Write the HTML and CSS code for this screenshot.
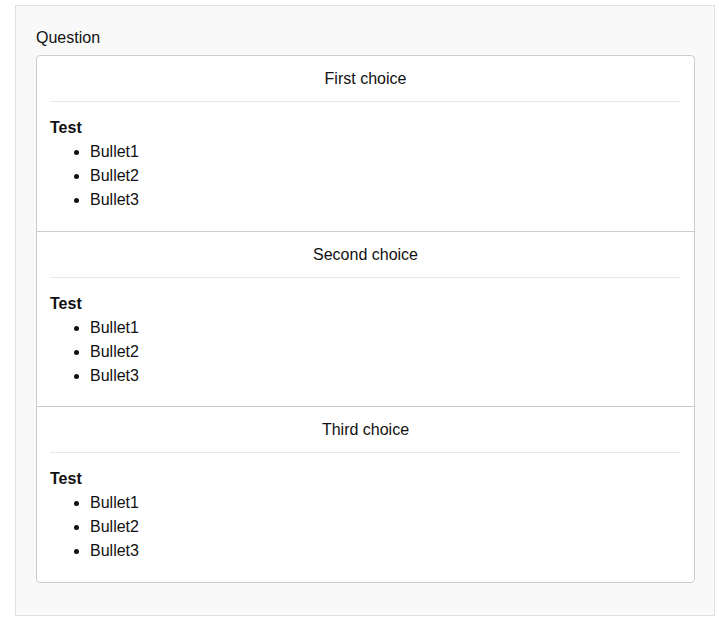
FILE: index.html
```html
<!DOCTYPE html>
<html>
<head>
<meta charset="utf-8">
<link rel="stylesheet" href="styles.css">
</head>
<body>
<div class="panel">
  <div class="label">Question</div>
  <div class="choices">
    <div class="choice">
      <div class="choice-title">First choice</div>
      <hr class="sep">
      <div class="choice-body">
        <strong>Test</strong>
        <ul>
          <li>Bullet1</li>
          <li>Bullet2</li>
          <li>Bullet3</li>
        </ul>
      </div>
    </div>
    <div class="choice">
      <div class="choice-title">Second choice</div>
      <hr class="sep">
      <div class="choice-body">
        <strong>Test</strong>
        <ul>
          <li>Bullet1</li>
          <li>Bullet2</li>
          <li>Bullet3</li>
        </ul>
      </div>
    </div>
    <div class="choice">
      <div class="choice-title">Third choice</div>
      <hr class="sep">
      <div class="choice-body">
        <strong>Test</strong>
        <ul>
          <li>Bullet1</li>
          <li>Bullet2</li>
          <li>Bullet3</li>
        </ul>
      </div>
    </div>
  </div>
</div>
</body>
</html>
```

FILE: styles.css
```css
html, body {
  margin: 0;
  padding: 0;
  background: #ffffff;
}
body {
  font-family: "Liberation Sans", Arial, sans-serif;
  font-size: 16px;
  line-height: 24px;
  color: #111;
}
.panel {
  box-sizing: border-box;
  margin: 5px 0 0 15px;
  width: 700px;
  height: 611px;
  background: #f9f9f9;
  border: 1px solid #e1e1e1;
  box-shadow: 0 1px 1px rgba(0,0,0,0.05);
  padding: 20px 19px 20px 20px;
}
.label {
  margin-bottom: 5px;
}
.choices {
  box-sizing: border-box;
  width: 659px;
  background: #fff;
  border: 1px solid #cccccc;
  border-radius: 4px;
}
.choice {
  padding: 11px 13px 17px 13px;
  height: 174.5px;
  box-sizing: border-box;
}
.choice + .choice {
  border-top: 1px solid #cccccc;
  height: 175.5px;
}
.choice-title {
  text-align: center;
}
.sep {
  border: 0;
  border-top: 1px solid #e8e8e8;
  height: 0;
  margin: 10px 0 14px 0;
}
.choice-body strong {
  display: block;
  font-weight: bold;
}
.choice-body ul {
  margin: 0;
  padding-left: 40px;
}
```
